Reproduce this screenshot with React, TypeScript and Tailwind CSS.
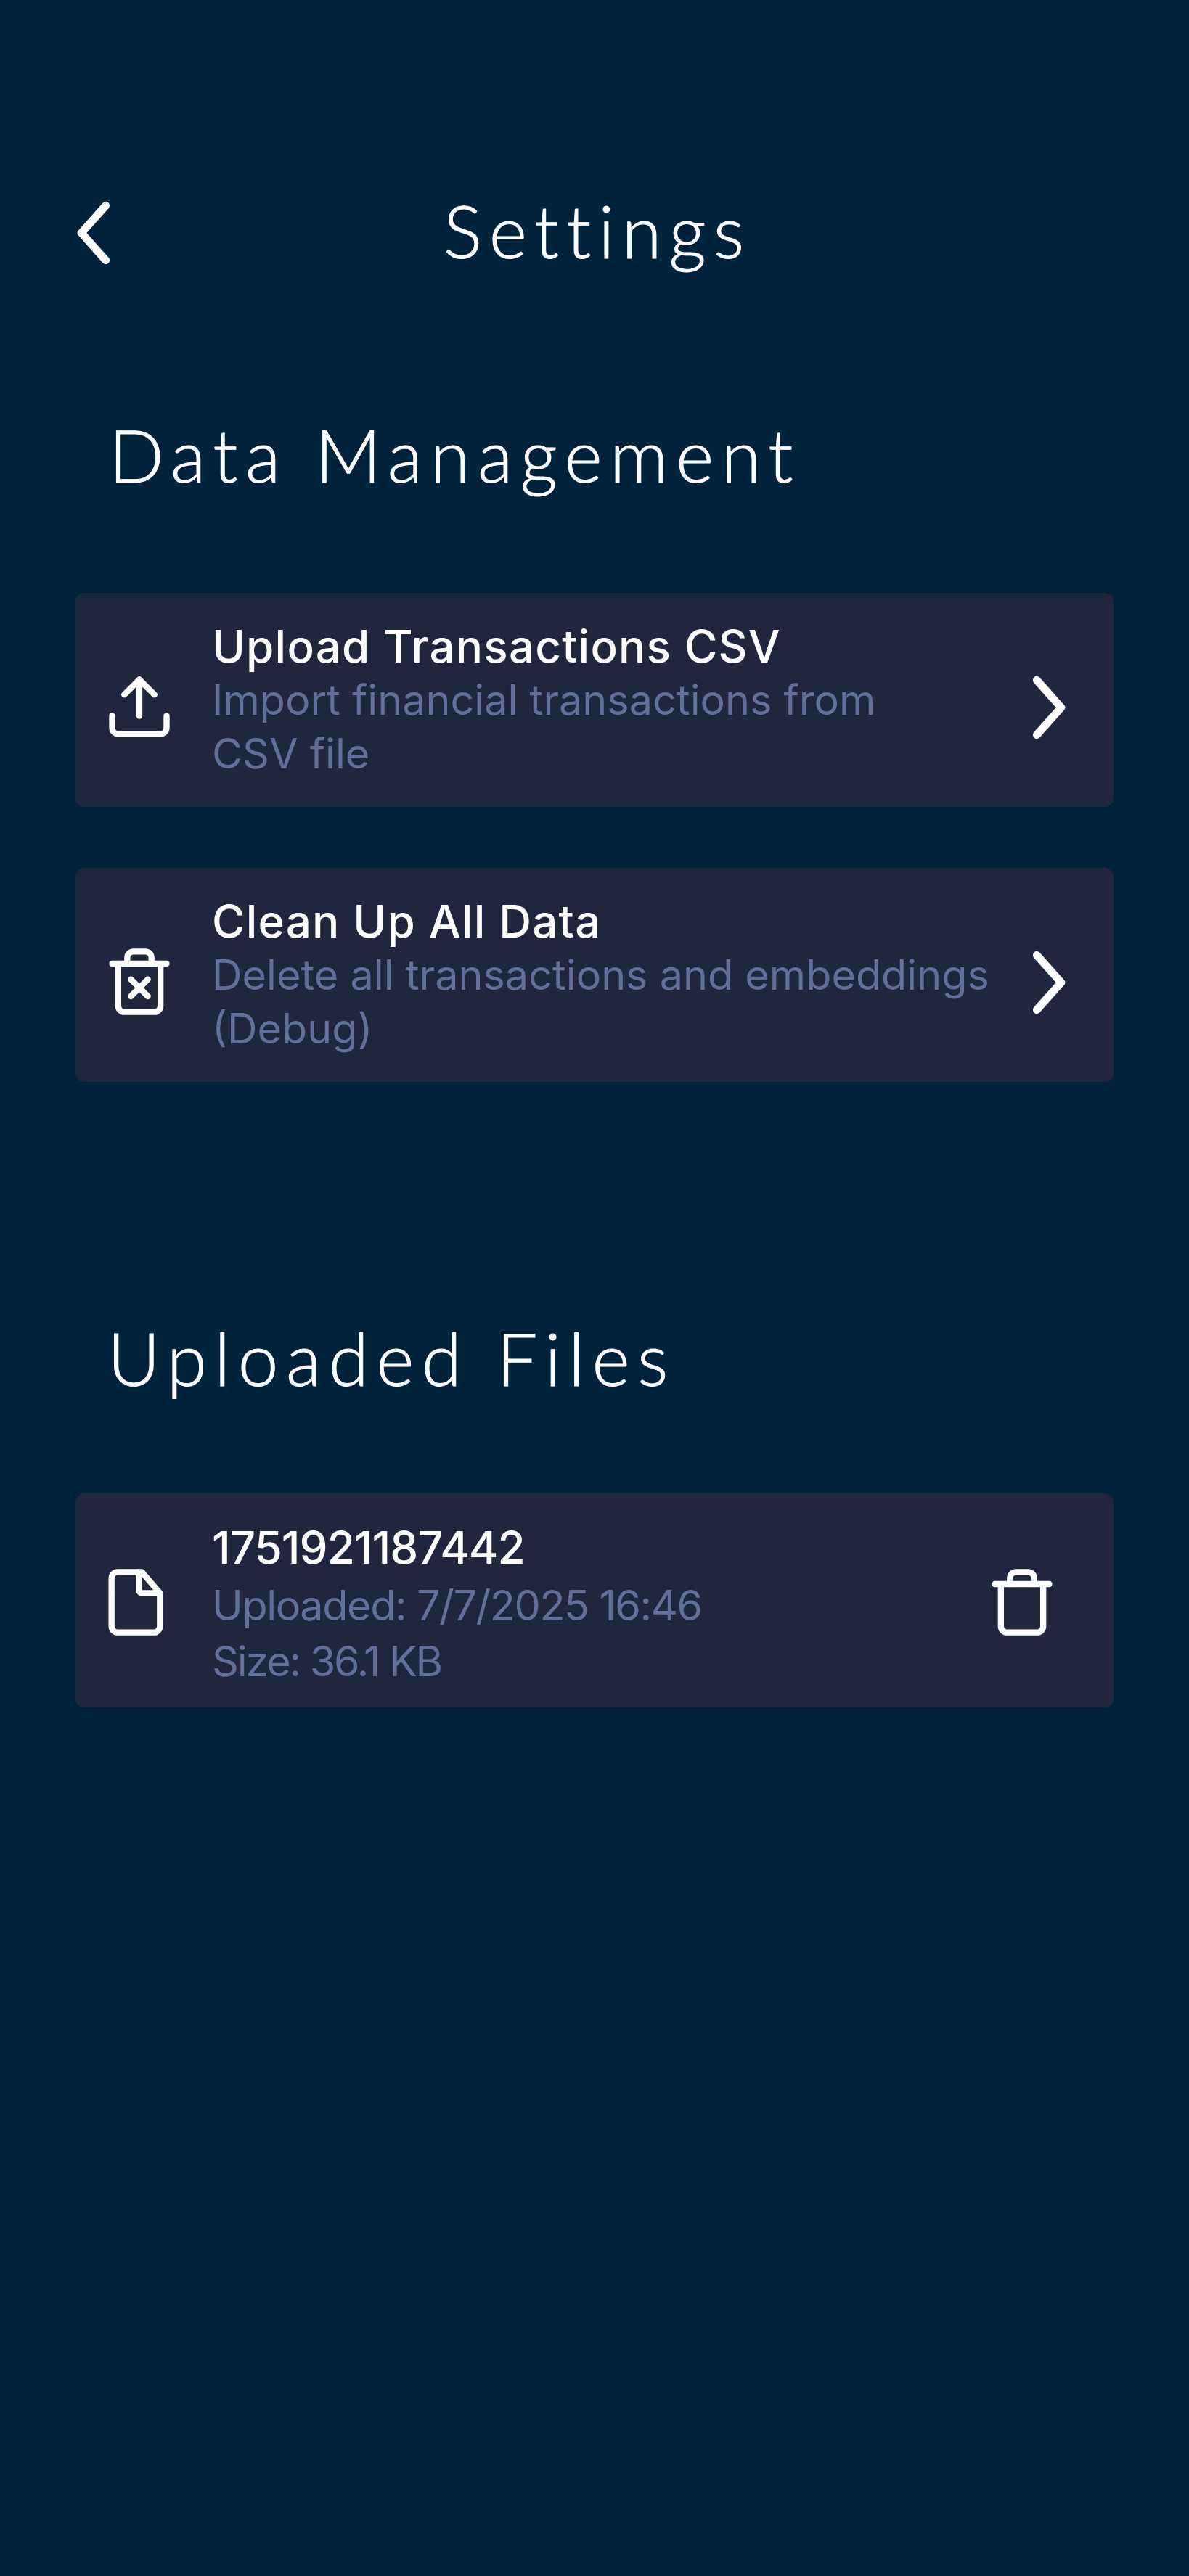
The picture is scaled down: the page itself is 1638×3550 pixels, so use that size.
import React from 'react';

const ChevronRight = () => (
  <svg className="w-[134px] h-[134px] shrink-0 mt-[21px]" fill="none" stroke="currentColor" viewBox="0 0 32 32" strokeWidth={2.6} strokeLinecap="round" strokeLinejoin="round" aria-hidden="true">
    <path d="M12.5 7l8 9-8 9" />
  </svg>
);

const ChevronLeft = () => (
  <svg className="w-[134px] h-[134px]" fill="none" stroke="currentColor" viewBox="0 0 32 32" strokeWidth={2.6} strokeLinecap="round" strokeLinejoin="round" aria-hidden="true">
    <path d="M19.5 7l-8 9 8 9" />
  </svg>
);

const UploadIcon = () => (
  <svg className="w-[100px] h-[100px] shrink-0" fill="none" stroke="currentColor" viewBox="0 0 24 24" strokeWidth={2} strokeLinecap="round" strokeLinejoin="round" aria-hidden="true">
    <path d="M21 15v4a2 2 0 0 1-2 2H5a2 2 0 0 1-2-2v-4" />
    <path d="M7 8l5-5 5 5" />
    <path d="M12 3v12" />
  </svg>
);

const TrashXIcon = () => (
  <svg className="w-[100px] h-[100px] shrink-0" fill="none" stroke="currentColor" viewBox="0 0 24 24" strokeWidth={2} strokeLinecap="round" strokeLinejoin="round" aria-hidden="true">
    <path d="M3 6h18" />
    <path d="M19 6v14a2 2 0 0 1-2 2H7a2 2 0 0 1-2-2V6" />
    <path d="M8 6V4a2 2 0 0 1 2-2h4a2 2 0 0 1 2 2v2" />
    <path d="M9.2 11.2l5.6 5.6M14.8 11.2l-5.6 5.6" />
  </svg>
);

const TrashIcon = () => (
  <svg className="w-[100px] h-[100px] shrink-0" fill="none" stroke="currentColor" viewBox="0 0 24 24" strokeWidth={2} strokeLinecap="round" strokeLinejoin="round" aria-hidden="true">
    <path d="M3 6h18" />
    <path d="M19 6v14a2 2 0 0 1-2 2H7a2 2 0 0 1-2-2V6" />
    <path d="M8 6V4a2 2 0 0 1 2-2h4a2 2 0 0 1 2 2v2" />
  </svg>
);

const FileIcon = () => (
  <svg className="w-[100px] h-[100px] shrink-0" fill="none" stroke="currentColor" viewBox="0 0 24 24" strokeWidth={2} strokeLinecap="round" strokeLinejoin="round" aria-hidden="true">
    <path d="M14 2H6a2 2 0 0 0-2 2v16a2 2 0 0 0 2 2h12a2 2 0 0 0 2-2V9z" />
    <path d="M13 2v6a1 1 0 0 0 1 1h6" />
  </svg>
);

const actions = [
  { icon: <UploadIcon />, title: 'Upload Transactions CSV', lines: ['Import financial transactions from', 'CSV file'] },
  { icon: <TrashXIcon />, title: 'Clean Up All Data', lines: ['Delete all transactions and embeddings', '(Debug)'] },
];

export default function App() {
  return (
    <div className="w-[1638px] h-[3550px] bg-[#00233c] text-white px-[104px] pt-[254px] font-['Inter',sans-serif]">
      {/* Header */}
      <div className="relative flex items-center justify-center h-[134px]">
        <div className="absolute left-[-40px] top-0">
          <ChevronLeft />
        </div>
        <h1 className="font-['Lato',sans-serif] font-light [-webkit-text-stroke:1px_white] text-[100px] leading-[126px] mb-[8px] ml-[8px] tracking-[10px]">Settings</h1>
      </div>

      {/* Data Management */}
      <h2 className="font-['Lato',sans-serif] font-light [-webkit-text-stroke:1px_white] text-[100px] leading-[120px] tracking-[10.4px] pl-[46px] mt-[178px]">
        Data Management
      </h2>
      <div className="flex flex-col gap-[84px] mt-[131px]">
        {actions.map((action) => (
          <div key={action.title} className="flex items-center h-[295px] bg-[#21263f] rounded-[12px] pl-[38px] pr-[24px]">
            <div className="mt-[18px]">{action.icon}</div>
            <div className="flex-1 ml-[50px]">
              <p className="text-[62px] leading-[73px] font-medium tracking-[1.2px]">{action.title}</p>
              {action.lines.map((line) => (
                <p key={line} className="text-[57.5px] leading-[74px] text-[#636f9b]">{line}</p>
              ))}
            </div>
            <ChevronRight />
          </div>
        ))}
      </div>

      {/* Uploaded Files */}
      <h2 className="font-['Lato',sans-serif] font-light [-webkit-text-stroke:1px_white] text-[100px] leading-[120px] tracking-[10.4px] pl-[44px] mt-[320px]">
        Uploaded Files
      </h2>
      <div className="flex items-center h-[295px] bg-[#21263f] rounded-[12px] pl-[33px] pr-[76px] mt-[127px]">
        <div className="mt-[5px]"><FileIcon /></div>
        <div className="flex-1 ml-[55px] mt-[8px]">
          <p className="text-[62px] leading-[82px] font-medium tracking-[-1px]">1751921187442</p>
          <p className="text-[57.5px] leading-[77px] tracking-[-1.4px] text-[#636f9b]">Uploaded: 7/7/2025 16:46</p>
          <p className="text-[57.5px] leading-[77px] tracking-[-2.2px] text-[#636f9b]">Size: 36.1 KB</p>
        </div>
        <div className="mt-[5px]"><TrashIcon /></div>
      </div>
    </div>
  );
}
